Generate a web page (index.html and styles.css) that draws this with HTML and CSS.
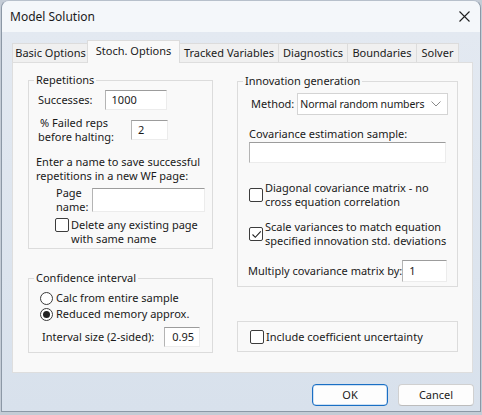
FILE: index.html
```html
<!DOCTYPE html>
<html>
<head>
<meta charset="utf-8">
<link rel="stylesheet" href="styles.css">
</head>
<body>
<div class="window">
  <div class="titlebar">
    <span class="title">Model Solution</span>
    <svg class="close" width="11" height="11" viewBox="0 0 11 11"><path d="M0.5 0.5 L10.5 10.5 M10.5 0.5 L0.5 10.5" stroke="#1f1f1f" stroke-width="1.1" fill="none"/></svg>
  </div>
  <div class="client">
    <div class="tabs">
      <div class="tab t1">Basic Options</div>
      <div class="tab selected">Stoch. Options</div>
      <div class="tab t3">Tracked Variables</div>
      <div class="tab t4">Diagnostics</div>
      <div class="tab t5">Boundaries</div>
      <div class="tab t6">Solver</div>
    </div>
    <div class="panel">
      <div class="col col-left">
        <fieldset class="group rep">
          <legend>Repetitions</legend>
          <div class="row succ">
            <span class="lbl">Successes:</span>
            <div class="input in-succ">1000</div>
          </div>
          <div class="row failed">
            <span class="lbl two"><span class="ind">% Failed reps</span><br>before halting:</span>
            <div class="input in-failed">2</div>
          </div>
          <div class="para">Enter a name to save successful<br>repetitions in a new WF page:</div>
          <div class="row page">
            <span class="lbl two">Page<br>name:</span>
            <div class="input in-page"></div>
          </div>
          <div class="row chk top delete">
            <span class="checkbox"></span>
            <span class="lbl">Delete any existing page<br>with same name</span>
          </div>
        </fieldset>
        <fieldset class="group conf">
          <legend>Confidence interval</legend>
          <div class="row radio-row r1">
            <span class="radio"></span>
            <span class="lbl">Calc from entire sample</span>
          </div>
          <div class="row radio-row r2">
            <span class="radio on"></span>
            <span class="lbl">Reduced memory approx.</span>
          </div>
          <div class="row interval">
            <span class="lbl">Interval size (2-sided):</span>
            <div class="input in-int">0.95</div>
          </div>
        </fieldset>
      </div>
      <div class="col col-right">
        <fieldset class="group innov">
          <legend>Innovation generation</legend>
          <div class="row method">
            <span class="lbl">Method:</span>
            <div class="select">
              <span class="sel-text">Normal random numbers</span>
              <svg width="10" height="6" viewBox="0 0 10 6"><path d="M0.5 0.5 L5 5 L9.5 0.5" stroke="#8a8a8a" stroke-width="1" fill="none"/></svg>
            </div>
          </div>
          <div class="para covlbl">Covariance estimation sample:</div>
          <div class="input in-cov"></div>
          <div class="row chk diag">
            <span class="checkbox"></span>
            <span class="lbl">Diagonal covariance matrix - no<br>cross equation correlation</span>
          </div>
          <div class="row chk scale">
            <span class="checkbox checked"><svg width="11" height="11" viewBox="0 0 11 11"><path d="M1.5 5.5 L4.3 8.3 L9.8 2.3" stroke="#222" stroke-width="1.1" fill="none"/></svg></span>
            <span class="lbl">Scale variances to match equation<br>specified innovation std. deviations</span>
          </div>
          <div class="row mult">
            <span class="lbl">Multiply covariance matrix by:</span>
            <div class="input in-mult">1</div>
          </div>
        </fieldset>
        <div class="group plain">
          <div class="row chk single">
            <span class="checkbox"></span>
            <span class="lbl">Include coefficient uncertainty</span>
          </div>
        </div>
      </div>
    </div>
    <div class="footer">
      <button class="btn default">OK</button>
      <button class="btn">Cancel</button>
    </div>
  </div>
</div>
</body>
</html>
```
FILE: styles.css
```css
* { box-sizing: border-box; }
html, body { margin: 0; padding: 0; }
body {
  width: 482px;
  height: 415px;
  background: #c4ccd6;
  font-family: "Noto Sans", "DejaVu Sans", sans-serif;
  font-size: 11px;
  line-height: 14px;
  color: #1a1a1a;
  overflow: hidden;
}
.window {
  margin: 0 1px;
  height: 412px;
  border: 1px solid #8c98a6;
  border-top-color: #b7c0cb;
  border-radius: 8px 8px 0 0;
  overflow: hidden;
  display: flex;
  flex-direction: column;
  background: #dae3ee;
}
.titlebar {
  height: 31px;
  flex: none;
  background: #f4f7fa;
  display: flex;
  align-items: center;
  justify-content: space-between;
  padding: 0 10px 0 8px;
}
.title { font-size: 12px; color: #1a1a1a; }
.client {
  flex: 1;
  padding: 8px 7px 0 10px;
  display: flex;
  flex-direction: column;
  background: linear-gradient(#e3e9f1, #d8e1ec);
}
.tabs {
  display: flex;
  align-items: flex-end;
  height: 22px;
  position: relative;
  z-index: 1;
}
.tab {
  height: 19px;
  padding: 0;
  text-align: center;
  background: #f0f0f0;
  border: 1px solid #dcdcdc;
  border-bottom: none;
  margin-right: -1px;
  line-height: 18px;
  white-space: nowrap;
}
.t1 { width: 77px; }
.t3 { width: 100px; }
.t4 { width: 70px; }
.t5 { width: 70px; }
.t6 { width: 43px; }
.tab.selected {
  width: 93px;
  height: 23px;
  background: #f9f9f9;
  margin: 0 -1px -1px -1px;
  line-height: 20px;
  position: relative;
  z-index: 2;
}
.panel {
  height: 311px;
  background: #f9f9f9;
  border: 1px solid #dedede;
  padding: 10px 13px 0 15px;
  display: grid;
  grid-template-columns: 185px 221px;
  column-gap: 24px;
  align-items: start;
}
.col { display: flex; flex-direction: column; }
.col-right { margin-top: 1px; }
.group {
  margin: 0;
  padding: 0;
  border: 1px solid #dcdcdc;
  min-width: 0;
}
legend {
  padding: 0 2px;
  margin-left: 5px;
  line-height: 14px;
}
.row { display: flex; align-items: center; }
.lbl { white-space: nowrap; }
.input {
  background: #fff;
  border: 1px solid #ececec;
  border-top-color: #9c9c9c;
  border-left-color: #b4b4b4;
  padding: 0 6px;
  white-space: nowrap;
}
/* Repetitions */
.rep { padding: 0 0 2px 0; }
.succ { margin-top: 3px; padding-left: 9px; }
.in-succ { margin-left: 12px; width: 62px; height: 20px; line-height: 18px; }
.failed { margin-top: 6px; padding-left: 9px; }
.failed .ind { padding-left: 2px; }
.in-failed { margin-left: auto; margin-right: 44px; width: 37px; height: 20px; line-height: 18px; }
.para { white-space: nowrap; }
.rep .para { margin-top: 11px; padding-left: 7px; }
.page { margin-top: 3px; padding-left: 27px; }
.in-page { margin-left: 4px; width: 113px; height: 24px; }
.delete { margin-top: 4px; padding-left: 26px; align-items: flex-start; }
.checkbox {
  flex: none;
  width: 14px;
  height: 14px;
  border: 1px solid #3c3c3c;
  border-radius: 2px;
  background: #fff;
  margin-right: 2px;
  display: flex;
  align-items: center;
  justify-content: center;
}
/* Confidence */
.conf { margin-top: 22px; padding: 0 0 5px 0; }
.radio-row { padding-left: 11px; }
.r1 { margin-top: 6px; }
.r2 { margin-top: 2px; }
.radio {
  flex: none;
  width: 13px;
  height: 13px;
  border: 1px solid #3a3a3a;
  border-radius: 50%;
  background: #fff;
  margin-right: 3px;
  display: flex;
  align-items: center;
  justify-content: center;
}
.radio.on::after {
  content: "";
  width: 7px;
  height: 7px;
  border-radius: 50%;
  background: #222;
}
.interval { margin-top: 6px; padding-left: 13px; }
.in-int { margin-left: auto; margin-right: 12px; width: 36px; height: 20px; line-height: 18px; text-align: right; padding: 0 5px; }
/* Innovation */
.innov { padding: 0 0 4px 0; }
.method { margin-top: 5px; padding-left: 13px; }
.select {
  margin-left: 3px;
  width: 151px;
  height: 22px;
  background: #fff;
  border: 1px solid #d4d4d4;
  display: flex;
  align-items: center;
  justify-content: space-between;
  padding: 0 6px 0 2px;
}
.sel-text { white-space: nowrap; font-size: 10.5px; letter-spacing: -0.1px; }
.covlbl { margin-top: 12px; padding-left: 11px; }
.in-cov { margin: 1px 0 0 11px; width: 197px; height: 21px; }
.diag { margin-top: 18px; padding-left: 11px; }
.scale { margin-top: 11px; padding-left: 11px; }
.mult { margin-top: 12px; padding-left: 10px; }
.in-mult { margin-left: auto; margin-right: 10px; width: 45px; height: 22px; line-height: 20px; }
.plain { margin-top: 34px; height: 31px; display: flex; align-items: center; }
.single { padding-left: 12px; margin-top: 1px; }
/* Footer */
.footer {
  display: flex;
  justify-content: flex-end;
  gap: 10px;
  padding-top: 11px;
  margin-right: -1px;
}
.btn {
  font: inherit;
  width: 76px;
  height: 22px;
  background: #fdfdfd;
  border: 1px solid #d0d0d0;
  border-bottom-color: #bcbcbc;
  border-radius: 4px;
  color: #1a1a1a;
  padding: 0;
}
.btn.default {
  border: 1.5px solid #1a6fc4;
  box-shadow: inset 0 0 0 0.5px #9ec3ea;
}
```
